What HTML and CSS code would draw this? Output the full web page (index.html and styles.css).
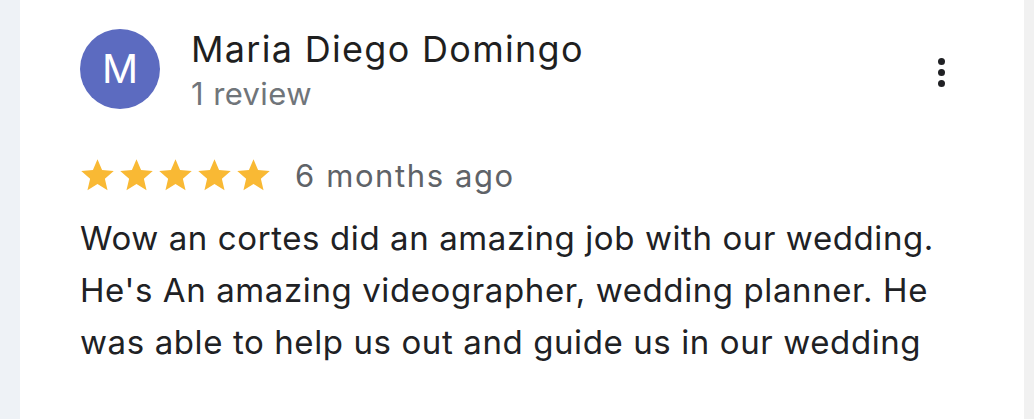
FILE: index.html
```html
<!DOCTYPE html>
<html>
<head>
<meta charset="utf-8">
<link rel="stylesheet" href="styles.css">
</head>
<body>
<div class="page">
  <div class="card">
    <div class="header">
      <div class="avatar">M</div>
      <div class="who">
        <div class="name">Maria Diego Domingo</div>
        <div class="count">1 review</div>
      </div>
      <div class="more" aria-label="More options">
        <span class="dot"></span><span class="dot"></span><span class="dot"></span>
      </div>
    </div>
    <div class="rating">
      <div class="stars">
        <svg viewBox="0 0 24 24"><path d="M12 17.27L18.18 21l-1.64-7.03L22 9.24l-7.19-.61L12 2 9.19 8.63 2 9.24l5.46 4.73L5.82 21z"/></svg>
        <svg viewBox="0 0 24 24"><path d="M12 17.27L18.18 21l-1.64-7.03L22 9.24l-7.19-.61L12 2 9.19 8.63 2 9.24l5.46 4.73L5.82 21z"/></svg>
        <svg viewBox="0 0 24 24"><path d="M12 17.27L18.18 21l-1.64-7.03L22 9.24l-7.19-.61L12 2 9.19 8.63 2 9.24l5.46 4.73L5.82 21z"/></svg>
        <svg viewBox="0 0 24 24"><path d="M12 17.27L18.18 21l-1.64-7.03L22 9.24l-7.19-.61L12 2 9.19 8.63 2 9.24l5.46 4.73L5.82 21z"/></svg>
        <svg viewBox="0 0 24 24"><path d="M12 17.27L18.18 21l-1.64-7.03L22 9.24l-7.19-.61L12 2 9.19 8.63 2 9.24l5.46 4.73L5.82 21z"/></svg>
      </div>
      <span class="when">6 months ago</span>
    </div>
    <p class="text">Wow an cortes did an amazing job with our wedding.<br>He's An amazing videographer, wedding planner. He<br>was able to help us out and guide us in our wedding</p>
  </div>
</div>
</body>
</html>
```

FILE: styles.css
```css
html, body {
  margin: 0;
  padding: 0;
}
body {
  background: #f1f1f1;
  font-family: Inter, Roboto, "Liberation Sans", Arial, sans-serif;
  color: #202124;
}
.page {
  display: flex;
  height: 419px;
}
.page::before {
  content: "";
  width: 20px;
  flex: none;
  background: #eef2f6;
}
.card {
  flex: 1;
  margin-right: 10px;
  background: #ffffff;
  padding: 29px 0 0 60px;
  box-sizing: border-box;
}
.header {
  display: flex;
  align-items: flex-start;
}
.avatar {
  width: 80px;
  height: 80px;
  border-radius: 50%;
  background: #5c6bc0;
  color: #ffffff;
  font-size: 40px;
  line-height: 80px;
  text-align: center;
  flex: none;
}
.who {
  margin-left: 31px;
  flex: 1;
}
.name {
  font-size: 36px;
  line-height: 40px;
  letter-spacing: 1.3px;
  color: #1f1f1f;
}
.count {
  font-size: 31px;
  line-height: 36px;
  margin-top: 7px;
  letter-spacing: 0.4px;
  color: #70757a;
}
.more {
  display: flex;
  flex-direction: column;
  gap: 4px;
  margin: 29px 79px 0 0;
}
.dot {
  width: 7px;
  height: 7px;
  border-radius: 50%;
  background: #202124;
}
.rating {
  display: flex;
  align-items: center;
  margin-top: 44px;
  margin-left: -2px;
}
.stars {
  display: flex;
}
.stars svg {
  width: 39px;
  height: 39px;
  fill: #f9b934;
}
.when {
  margin-left: 22px;
  font-size: 31px;
  line-height: 39px;
  letter-spacing: 1.6px;
  color: #5f6368;
}
.text {
  margin: 17px 0 0 0;
  font-size: 33px;
  line-height: 52px;
  letter-spacing: 0.6px;
  color: #202124;
}
```
